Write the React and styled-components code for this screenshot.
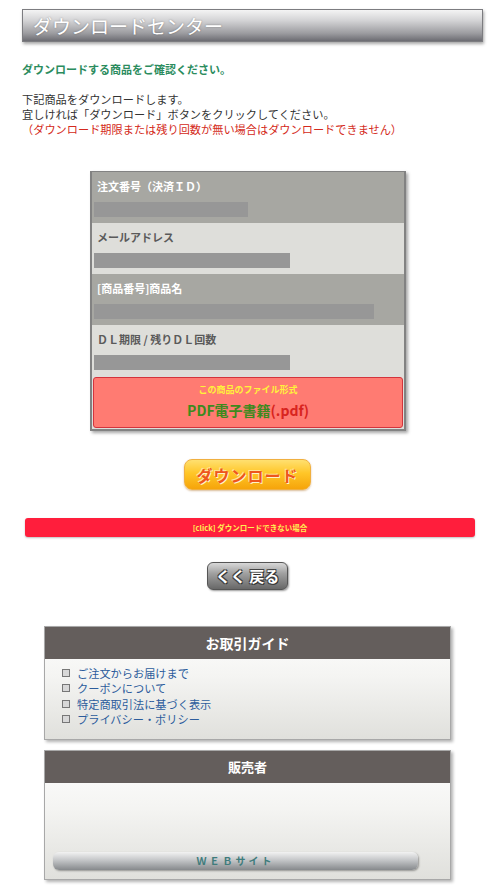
import React from "react"
import styled, { createGlobalStyle } from "styled-components"

const GlobalStyle = createGlobalStyle`
  html, body {
    margin: 0;
    padding: 0;
    background: #fff;
  }

  body {
    font-family: "Noto Sans CJK JP", "Noto Sans", sans-serif;
    color: #333;
  }
`

const Page = styled.div`
  width: 451px;
  padding: 9px 27px 6px 22px;
`

const TitleBar = styled.h1`
  margin: 0 -10px 0 0;
  height: 31px;
  padding-left: 10px;
  border: 1px solid #7c7c80;
  background: linear-gradient(#f4f4f4 0%, #d2d2d4 35%, #9c9ca0 75%, #6c6c72 100%);
  box-shadow: 1px 2px 3px rgba(0, 0, 0, 0.35);
  color: #fff;
  font-size: 19px;
  font-weight: normal;
  line-height: 31px;
  text-shadow: 0 0 2px rgba(0, 0, 0, 0.35);
`

const Lead = styled.p`
  margin: 19px 0 0;
  color: #2b8c5e;
  font-size: 11px;
  font-weight: bold;
  line-height: 16px;
`

const Notes = styled.div`
  margin-top: 15px;
  font-size: 11.2px;
  line-height: 15px;
  color: #333;
`

const Warn = styled.div`
  color: #d42a20;
`

const Sheet = styled.div`
  width: 312px;
  margin: 34px 0 0 68px;
  border: 2px solid #828282;
  border-top-width: 1px;
  box-shadow: 2px 2px 3px rgba(0, 0, 0, 0.35);
  background: #dededa;
`

const Row = styled.div`
  padding: 0 2px;
  height: 51px;
  background: ${p => (p.$dark ? "#a7a7a2" : "#dededa")};
`

const Label = styled.div`
  height: 24px;
  padding: 5px 0 0 3px;
  font-size: 11px;
  font-weight: bold;
  line-height: 18px;
  color: ${p => (p.$dark ? "#fff" : "#5a5a5a")};
`

const Blank = styled.div`
  height: 15px;
  margin-top: 1px;
  background: #979797;
`

const Format = styled.div`
  margin: 1px 1px 1px;
  height: 49px;
  border: 1px solid #d3343c;
  border-radius: 3px;
  background: #ff7b72;
  text-align: center;
`

const FormatCaption = styled.div`
  padding-top: 6px;
  font-size: 9px;
  font-weight: bold;
  line-height: 12px;
  color: #fff23a;
`

const FormatName = styled.div`
  margin-top: 5px;
  font-size: 14px;
  font-weight: bold;
  line-height: 18px;
  color: #3d8a1e;

  & span {
    color: #d82420;
  }
`

const Centered = styled.div`
  display: flex;
  justify-content: center;
  margin-top: ${p => p.$top}px;
`

const DownloadButton = styled.button`
  width: 127px;
  height: 31px;
  padding: 0;
  border: 1px solid #f0b040;
  border-radius: 8px;
  background: linear-gradient(#ffe070 0%, #ffc628 45%, #f6a40a 100%);
  box-shadow: 0 1px 2px rgba(160, 90, 0, 0.4);
  color: #ee561c;
  font-family: inherit;
  font-size: 16px;
  font-weight: bold;
  letter-spacing: 1px;
  text-shadow: 1px 1px 0 #fff3c8, -1px -1px 0 #ffe49a;
`

const TroubleBar = styled.div`
  margin: 28px -2px 0 3px;
  height: 19px;
  border-radius: 3px;
  background: #ff1e3c;
  box-shadow: 0 1px 2px rgba(0, 0, 0, 0.25);
  color: #ffee52;
  font-size: 7.5px;
  font-weight: bold;
  line-height: 19px;
  text-align: center;
`

const BackButton = styled.button`
  width: 81px;
  height: 28px;
  padding: 0;
  border: 1px solid #555;
  border-radius: 6px;
  background: linear-gradient(#d8d8d8 0%, #a0a0a0 40%, #686868 100%);
  box-shadow: 1px 1px 2px rgba(0, 0, 0, 0.4);
  color: #fff;
  font-family: inherit;
  font-size: 15px;
  font-weight: bold;
  line-height: 26px;
  text-shadow: 1px 1px 0 #333, -1px -1px 0 #444, 1px -1px 0 #444, -1px 1px 0 #444;
`

const Panel = styled.section`
  width: 405px;
  margin: ${p => p.$top}px 0 0 22px;
  border: 1px solid #a8a8a8;
  box-shadow: 2px 2px 3px rgba(0, 0, 0, 0.3);
  background: linear-gradient(#ffffff 0%, #f4f4f2 45%, #e0e0dc 100%);
`

const PanelHead = styled.h2`
  margin: 0;
  height: 32px;
  background: #645e5c;
  color: #fff;
  font-size: ${p => p.$size || 14}px;
  font-weight: bold;
  line-height: 32px;
  text-align: center;
`

const GuideList = styled.ul`
  list-style: none;
  margin: 0;
  padding: 6px 0 12px 17px;
`

const GuideItem = styled.li`
  display: flex;
  align-items: center;
  height: 15.5px;
  font-size: 11.2px;
  color: #2c5c9c;

  &::before {
    content: "";
    width: 6px;
    height: 6px;
    margin-right: 7px;
    border: 1px solid #777;
    background: #d8d8d8;
  }
`

const SellerBody = styled.div`
  height: 96px;
  display: flex;
  align-items: flex-end;
  padding: 0 0 9px 8px;
  box-sizing: border-box;
`

const SiteButton = styled.div`
  width: 365px;
  height: 18px;
  border-radius: 6px;
  background: linear-gradient(#f2f2f2 0%, #c4c6c8 45%, #86898c 100%);
  box-shadow: 1px 1px 2px rgba(0, 0, 0, 0.35);
  color: #3f7c7c;
  font-size: 10px;
  font-weight: bold;
  letter-spacing: 3px;
  line-height: 18px;
  text-align: center;
`

const rows = [
  { label: "注文番号（決済ＩＤ）", width: 154, dark: true },
  { label: "メールアドレス", width: 196 },
  { label: "[商品番号]商品名", width: 280, dark: true },
  { label: "ＤＬ期限 / 残りＤＬ回数", width: 196 },
]

const guides = [
  "ご注文からお届けまで",
  "クーポンについて",
  "特定商取引法に基づく表示",
  "プライバシー・ポリシー",
]

export default function App() {
  return (
    <>
      <GlobalStyle />
      <Page>
        <TitleBar>ダウンロードセンター</TitleBar>
        <Lead>ダウンロードする商品をご確認ください。</Lead>
        <Notes>
          <div>下記商品をダウンロードします。</div>
          <div>宜しければ「ダウンロード」ボタンをクリックしてください。</div>
          <Warn>（ダウンロード期限または残り回数が無い場合はダウンロードできません）</Warn>
        </Notes>

        <Sheet>
          {rows.map(r => (
            <Row key={r.label} $dark={r.dark}>
              <Label $dark={r.dark}>{r.label}</Label>
              <Blank style={{ width: r.width }} />
            </Row>
          ))}
          <Format>
            <FormatCaption>この商品のファイル形式</FormatCaption>
            <FormatName>
              PDF電子書籍<span>(.pdf)</span>
            </FormatName>
          </Format>
        </Sheet>

        <Centered $top={28}>
          <DownloadButton>ダウンロード</DownloadButton>
        </Centered>

        <TroubleBar>[click] ダウンロードできない場合</TroubleBar>

        <Centered $top={25}>
          <BackButton>くく 戻る</BackButton>
        </Centered>

        <Panel $top={36}>
          <PanelHead>お取引ガイド</PanelHead>
          <GuideList>
            {guides.map(g => (
              <GuideItem key={g}>{g}</GuideItem>
            ))}
          </GuideList>
        </Panel>

        <Panel $top={10}>
          <PanelHead $size={13}>販売者</PanelHead>
          <SellerBody>
            <SiteButton>ＷＥＢサイト</SiteButton>
          </SellerBody>
        </Panel>
      </Page>
    </>
  )
}
